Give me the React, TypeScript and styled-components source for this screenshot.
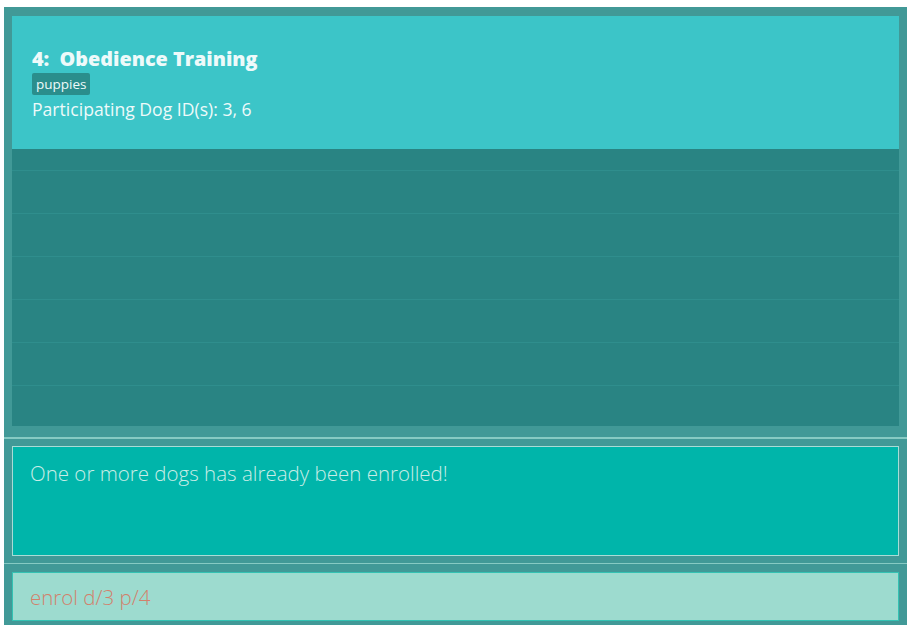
import React from "react";
import styled, { createGlobalStyle } from "styled-components";

const Global = createGlobalStyle`
  html, body { margin: 0; padding: 0; background: #ffffff; }
  body { font-family: "Open Sans", "Noto Sans", sans-serif; }
`;

const Page = styled.div`
  padding: 7px 6px 5px 4px;
  width: 913px;
  height: 630px;
  box-sizing: border-box;
`;

const Outer = styled.div`
  background: #419997;
  height: 618px;
  display: flex;
  flex-direction: column;
`;

const Section = styled.div<{ $pt: number; $pb: number }>`
  padding: ${(p) => p.$pt}px 8px ${(p) => p.$pb}px 8px;
`;

const Divider = styled.div`
  height: 2px;
  background: #86cac3;
`;

const ListPanel = styled.div`
  height: 410px;
  background: #298483;
  display: flex;
  flex-direction: column;
  overflow: hidden;
`;

const Card = styled.div`
  height: 133px;
  flex-shrink: 0;
  box-sizing: border-box;
  background: #3cc5c8;
  padding: 31px 20px 0 20px;
  color: #eefafa;
  display: flex;
  flex-direction: column;
  align-items: flex-start;
`;

const Title = styled.div`
  font-weight: 800;
  font-size: 19.8px;
  line-height: 24px;
  white-space: pre;
`;

const Tag = styled.span`
  margin-top: 2px;
  background: #2a8e8c;
  color: #eefafa;
  font-size: 13.5px;
  line-height: 22px;
  padding: 0 4px;
  border-radius: 2px;
`;

const Info = styled.div`
  margin-top: 2px;
  font-size: 17.6px;
  font-weight: 500;
  line-height: 24px;
`;

const EmptyRow = styled.div<{ $h: number; $line: boolean }>`
  height: ${(p) => p.$h}px;
  flex-shrink: 0;
  box-sizing: border-box;
  border-top: ${(p) => (p.$line ? "1px solid #2f8e8d" : "none")};
`;

const ResultBox = styled.div`
  height: 110px;
  box-sizing: border-box;
  background: #00b5aa;
  border: 1px solid #a9dcd6;
  padding: 12px 17px;
  color: #c9ede7;
  font-size: 20.5px;
  font-weight: 300;
  line-height: 28px;
`;

const CommandBox = styled.div`
  height: 49px;
  box-sizing: border-box;
  background: #9ddbcf;
  border: 1px solid #34c2b3;
  padding: 1px 17px 0;
  display: flex;
  align-items: center;
  color: #d2816c;
  font-size: 20.5px;
  font-weight: 300;
`;

const rows: Array<[number, boolean]> = [
  [21, false],
  [43, true],
  [43, true],
  [43, true],
  [43, true],
  [43, true],
  [43, true],
];

export default function App() {
  return (
    <>
      <Global />
      <Page>
        <Outer>
          <Section $pt={9} $pb={11}>
            <ListPanel>
              <Card>
                <Title>{"4:  Obedience Training"}</Title>
                <Tag>puppies</Tag>
                <Info>Participating Dog ID(s): 3, 6</Info>
              </Card>
              {rows.map(([h, line], i) => (
                <EmptyRow key={i} $h={h} $line={line} />
              ))}
            </ListPanel>
          </Section>
          <Divider />
          <Section $pt={7} $pb={7}>
            <ResultBox>One or more dogs has already been enrolled!</ResultBox>
          </Section>
          <Divider />
          <Section $pt={8} $pb={4}>
            <CommandBox>enrol d/3 p/4</CommandBox>
          </Section>
        </Outer>
      </Page>
    </>
  );
}
